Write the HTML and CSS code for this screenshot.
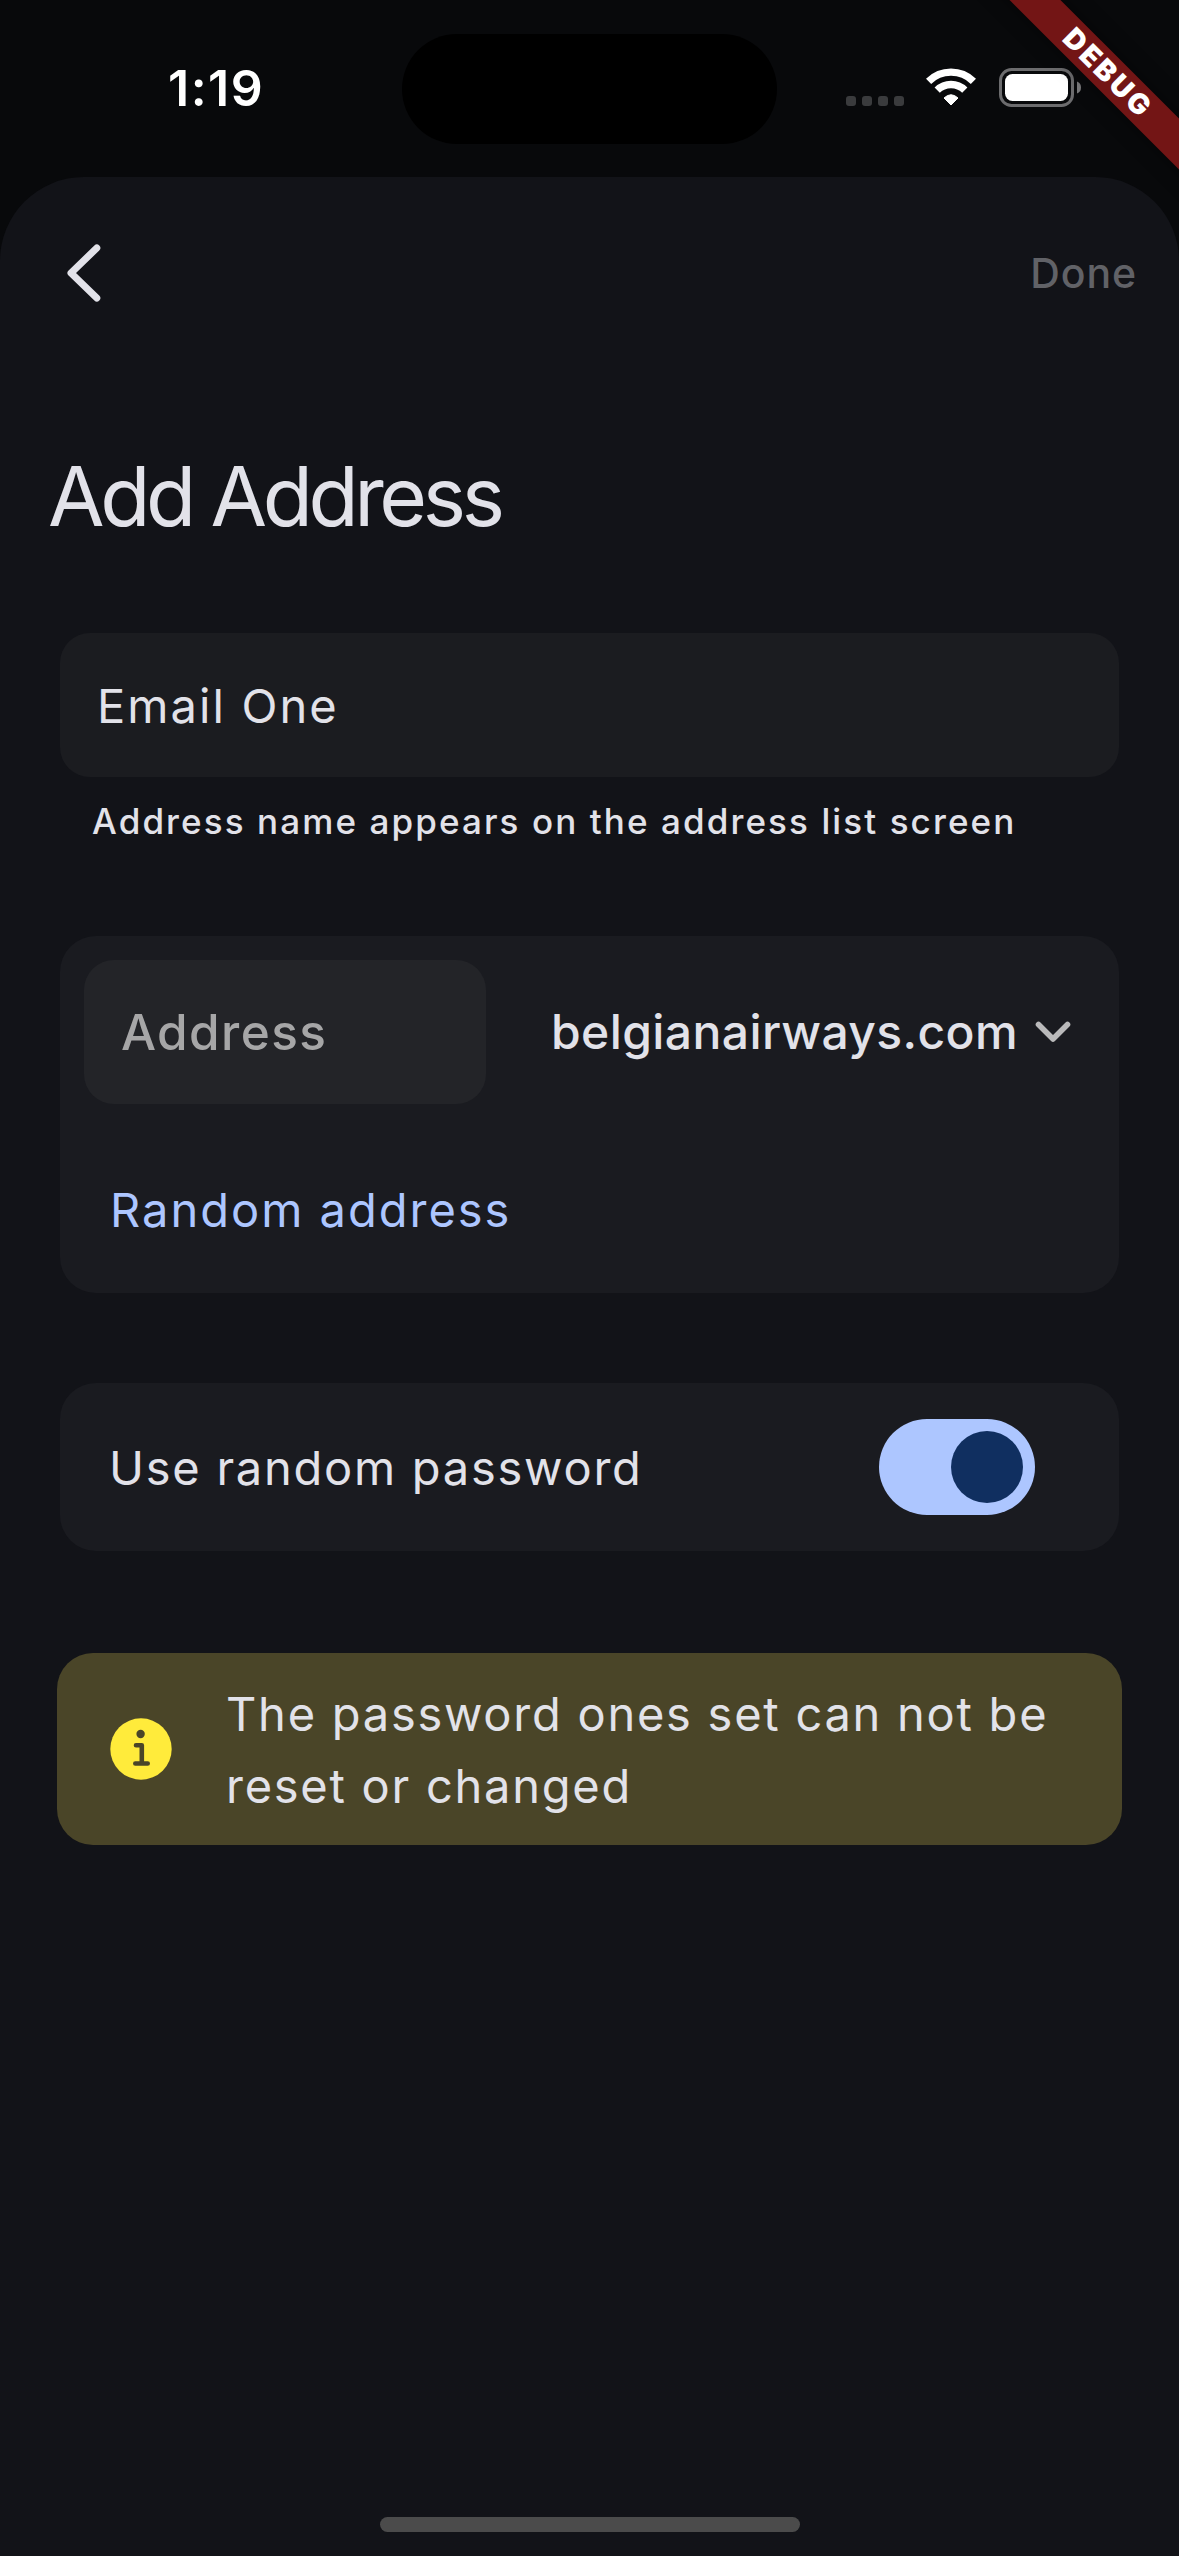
FILE: index.html
```html
<!DOCTYPE html>
<html lang="en">
<head>
<meta charset="utf-8">
<title>Add Address</title>
<link rel="stylesheet" href="styles.css">
</head>
<body>
<div class="screen">
  <header class="status">
    <div class="time">1:19</div>
    <div class="island"></div>
    <div class="indicators">
      <div class="cell"><i></i><i></i><i></i><i></i></div>
      <svg class="wifi" width="50" height="38" viewBox="0 0 50 38">
        <g fill="none" stroke="#fff" stroke-width="7.4">
          <path d="M2.6 13.3A32 32 0 0 1 47.4 13.3"/>
          <path d="M11.2 22.2A19.6 19.6 0 0 1 38.8 22.2"/>
        </g>
        <path fill="#fff" stroke="#fff" stroke-width="1" stroke-linejoin="round" d="M25 37L18 30Q25 23.5 32 30Z"/>
      </svg>
      <svg class="battery" width="83" height="40" viewBox="0 0 83 40">
        <rect x="1.5" y="1.5" width="72" height="36" rx="11" fill="none" stroke="#6c6c6e" stroke-width="3"/>
        <rect x="6" y="6" width="63" height="27" rx="7.5" fill="#fff"/>
        <path d="M78 13.5Q82 15 82 19.5T78 25.5Z" fill="#7a7a7c"/>
      </svg>
    </div>
  </header>
  <main class="sheet">
    <nav class="bar">
      <svg width="34" height="58" viewBox="0 0 34 58"><path d="M29.8 4L4 29L29.8 54" fill="none" stroke="#e2e2e9" stroke-width="7" stroke-linecap="round" stroke-linejoin="round"/></svg>
      <span class="done">Done</span>
    </nav>
    <h1 class="title">Add Address</h1>
    <div class="field name">Email One</div>
    <p class="helper">Address name appears on the address list screen</p>
    <section class="card address">
      <div class="row">
        <div class="field local">Address</div>
        <div class="domain">
          <span>belgianairways.com</span>
          <svg width="36" height="22" viewBox="0 0 36 22"><path d="M3.5 3.5L18 18L32.5 3.5" fill="none" stroke="#bababb" stroke-width="5.6" stroke-linecap="round" stroke-linejoin="round"/></svg>
        </div>
      </div>
      <a class="random">Random address</a>
    </section>
    <section class="card password">
      <span class="label">Use random password</span>
      <div class="switch"><div class="thumb"></div></div>
    </section>
    <section class="notice">
      <svg width="62" height="62" viewBox="0 0 62 62">
        <circle cx="31" cy="31" r="30.7" fill="#ffeb3b"/>
        <circle cx="30.6" cy="16" r="4.2" fill="#4a4528"/>
        <path d="M26 27.3H31.8V45.5M25.3 45.5H37.7" fill="none" stroke="#4a4528" stroke-width="4.6" stroke-linecap="round" stroke-linejoin="round"/>
      </svg>
      <p class="message">The password ones set can not be<br>reset or changed</p>
    </section>
    <div class="home"></div>
  </main>
  <div class="debug">DEBUG</div>
</div>
</body>
</html>
```

FILE: styles.css
```css
* { box-sizing: border-box; margin: 0; padding: 0; }

body {
  background: #08090b;
  color: #e2e2e9;
  font-family: Inter, "Liberation Sans", sans-serif;
}

svg { display: block; flex: none; }

.screen {
  position: relative;
  display: flex;
  flex-direction: column;
  width: 1179px;
  height: 2556px;
  overflow: hidden;
}

.status {
  display: flex;
  align-items: center;
  height: 177px;
  flex: none;
}

.time {
  width: 234px;
  margin: 0 0 2px 168px;
  line-height: 60px;
  font-size: 50px;
  font-weight: 600;
  letter-spacing: 1.5px;
  color: #fff;
}

.island { width: 375px; height: 110px; margin-top: 1px; border-radius: 55px; background: #000; }

.indicators { display: flex; margin: 0 0 2px 69px; height: 40px; }

.cell { display: flex; gap: 6px; align-items: flex-end; padding-bottom: 2px; width: 80px; }
.cell i { width: 10px; height: 10px; border-radius: 3px; background: #3a3b3d; }
.wifi { margin-right: 23px; }

.sheet {
  flex: 1;
  display: flex;
  flex-direction: column;
  padding: 0 60px;
  border-radius: 84px 84px 0 0;
  background: #121318;
}

.bar {
  display: flex;
  align-items: center;
  justify-content: space-between;
  height: 192px;
  margin-right: -18px;
  padding-left: 7px;
}

.done { font-size: 41px; line-height: 50px; letter-spacing: 0.9px; font-weight: 450; color: #616267; }

.title {
  margin: 78px 0 86px -12px;
  font-size: 82px;
  line-height: 100px;
  font-weight: 400;
  letter-spacing: -4.4px;
}

.field { height: 144px; border-radius: 30px; line-height: 145px; }
.name { padding-left: 37px; background: #1b1c20; font-size: 47px; letter-spacing: 2.1px; }

.helper {
  margin: 19px 0 89px 32px;
  font-size: 35px;
  line-height: 51px;
  letter-spacing: 2.1px;
  font-weight: 450;
}

.card { border-radius: 36px; background: #1a1b20; }

.address { height: 357px; padding: 24px; }
.row { display: flex; align-items: center; gap: 65px; }
.local { width: 402px; padding-left: 37px; background: #232428; color: #a6a6a7; font-size: 49.5px; font-weight: 450; letter-spacing: 1.4px; }
.domain { display: flex; align-items: center; gap: 17px; font-size: 48px; font-weight: 500; line-height: 60px; letter-spacing: 0.4px; }
.random { display: block; margin: 76px 0 0 26px; font-size: 47px; line-height: 60px; color: #adc6ff; }

.password {
  display: flex;
  align-items: center;
  justify-content: space-between;
  height: 168px;
  margin-top: 90px;
  padding: 0 84px 0 49px;
}
.label, .message { letter-spacing: 1.75px; }
.random { letter-spacing: 2px; }
.label { font-size: 47px; }

.switch { display: flex; justify-content: flex-end; width: 156px; height: 96px; padding: 12px; border-radius: 48px; background: #adc6ff; }
.thumb { width: 72px; height: 72px; border-radius: 50%; background: #102f60; }

.notice {
  display: flex;
  align-items: center;
  gap: 54px;
  height: 192px;
  margin: 102px -3px 0;
  padding-left: 53px;
  border-radius: 36px;
  background: #4a4528;
}
.message { padding-top: 2px; font-size: 47px; line-height: 72px; white-space: nowrap; }

.home { width: 420px; height: 15px; margin: auto auto 24px 320px; border-radius: 8px; background: #4b4b4b; }

/* Corner ribbon lies over the status bar */
.debug {
  position: absolute;
  top: 54px;
  left: 957px;
  width: 300px;
  height: 36px;
  transform: rotate(45deg);
  background: #731515;
  box-shadow: 0 0 18px rgba(0, 0, 0, 0.5);
  color: #fff;
  font-size: 28.5px;
  font-weight: 900;
  letter-spacing: 2.8px;
  line-height: 36px;
  text-align: center;
  text-indent: 3px;
}
```
